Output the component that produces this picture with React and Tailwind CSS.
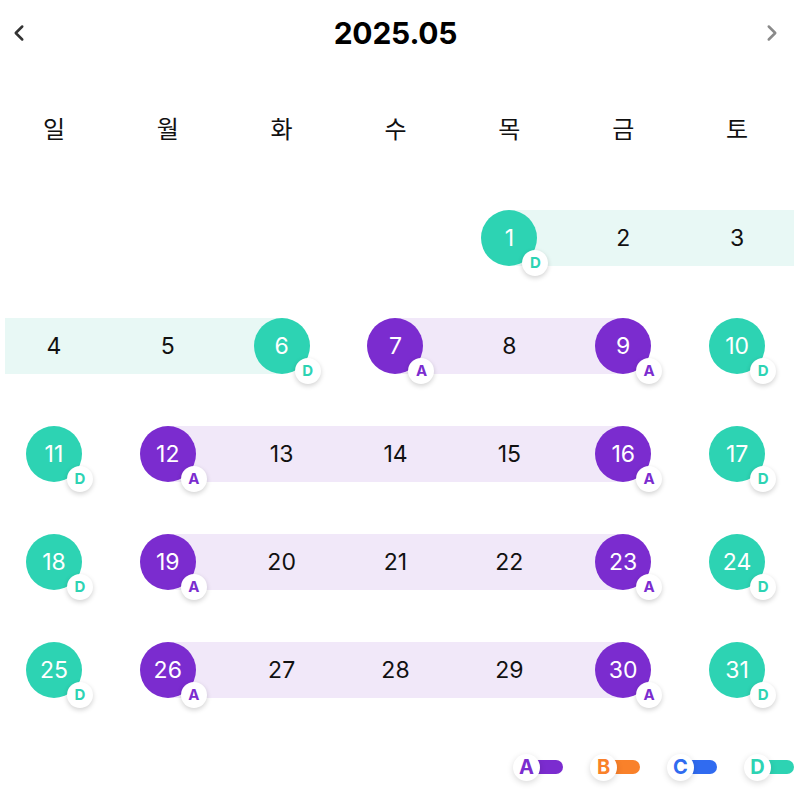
import { ChevronLeft, ChevronRight } from 'lucide-react'

const WEEKDAYS = ['일', '월', '화', '수', '목', '금', '토']

// band colours per range type
const BAND = { D: 'bg-[#e8f8f5]', A: 'bg-[#f1e8f9]' }
const CIRCLE = { D: 'bg-[#2dd3b3]', A: 'bg-[#7b2ccf]' }
const BADGE_TEXT = { D: 'text-[#2dd3b3]', A: 'text-[#7b2ccf]' }

// day -> { circle, band, left, right, inset }
function dayInfo(day) {
  const standalone = [10, 11, 17, 18, 24, 25, 31]
  if (standalone.includes(day)) return { circle: 'D' }
  if (day >= 1 && day <= 6) {
    if (day === 1) return { circle: 'D', band: 'D', right: true }
    if (day === 6) return { circle: 'D', band: 'D', left: true }
    return { band: 'D', left: true, right: true, inset: day === 4 }
  }
  const ranges = [[7, 9], [12, 16], [19, 23], [26, 30]]
  for (const [s, e] of ranges) {
    if (day === s) return { circle: 'A', band: 'A', right: true }
    if (day === e) return { circle: 'A', band: 'A', left: true }
    if (day > s && day < e) return { band: 'A', left: true, right: true }
  }
  return {}
}

function DayCell({ day }) {
  if (!day) return <div className="h-[56px]" />
  const info = dayInfo(day)
  const bg = info.band ? BAND[info.band] : ''
  return (
    <div className="grid grid-cols-2 h-[56px]">
      <div className={`col-start-1 row-start-1 ${info.left ? bg : ''} ${info.inset ? 'ml-[8px]' : ''}`} />
      <div className={`col-start-2 row-start-1 ${info.right ? bg : ''}`} />
      <div className="col-start-1 col-span-2 row-start-1 flex items-center justify-center">
        {info.circle ? (
          <div className={`relative w-[56px] h-[56px] rounded-full ${CIRCLE[info.circle]} flex items-center justify-center text-white text-[23px]`}>
            {day}
            <span className={`absolute -right-[11px] -bottom-[10px] w-[26px] h-[26px] rounded-full bg-white shadow-[0_2px_5px_rgba(0,0,0,0.18)] flex items-center justify-center text-[15px] font-bold ${BADGE_TEXT[info.circle]}`}>
              {info.circle}
            </span>
          </div>
        ) : (
          <span className="text-[23px] text-[#111]">{day}</span>
        )}
      </div>
    </div>
  )
}

const LEGEND = [
  { key: 'A', text: 'text-[#7b2ccf]', pill: 'bg-[#7b2ccf]' },
  { key: 'B', text: 'text-[#f9812a]', pill: 'bg-[#f9812a]' },
  { key: 'C', text: 'text-[#306bf0]', pill: 'bg-[#306bf0]' },
  { key: 'D', text: 'text-[#2dd3b3]', pill: 'bg-[#2dd3b3]' },
]

export default function App() {
  const cells = [null, null, null, null, ...Array.from({ length: 31 }, (_, i) => i + 1)]

  return (
    <div className="bg-white min-h-[796px] font-['Inter',sans-serif]">
      <div className="-ml-[3px] w-[797px]">
        {/* Header */}
        <div className="h-[66px] flex items-center justify-between px-[9px]">
          <ChevronLeft size={26} strokeWidth={2.3} className="text-[#333]" />
          <h1 className="text-[30px] font-bold text-black tracking-[-0.2px]">2025.05</h1>
          <ChevronRight size={26} strokeWidth={2.3} className="text-[#8a8a8a]" />
        </div>

        {/* Weekdays */}
        <div className="grid grid-cols-7 mt-[42px] h-[40px] items-center">
          {WEEKDAYS.map(w => (
            <div key={w} className="text-center text-[24px] text-[#111] font-['Noto_Sans_CJK_KR',sans-serif]">{w}</div>
          ))}
        </div>

        {/* Days */}
        <div className="grid grid-cols-7 gap-y-[52px] mt-[62px]">
          {cells.map((d, i) => <DayCell key={i} day={d} />)}
        </div>

        {/* Legend */}
        <div className="flex justify-end items-center gap-[27px] mt-[55px] h-[28px]">
          {LEGEND.map(l => (
            <div key={l.key} className="flex items-center">
              <span className={`relative z-10 w-[27px] h-[27px] rounded-full bg-white shadow-[0_2px_6px_rgba(0,0,0,0.15)] flex items-center justify-center text-[20px] font-bold ${l.text}`}>
                {l.key}
              </span>
              <span className={`-ml-[6px] w-[29px] h-[14px] rounded-r-full ${l.pill}`} />
            </div>
          ))}
        </div>
      </div>
    </div>
  )
}
